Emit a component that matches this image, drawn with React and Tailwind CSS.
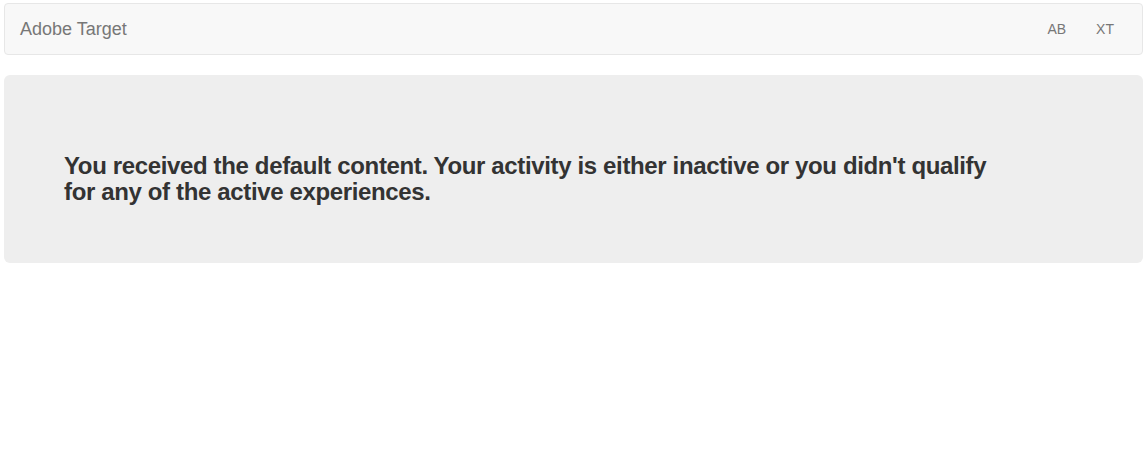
export default function App() {
  return (
    <div
      className="w-full min-h-[473px] bg-white pl-[4px] pr-[2px] pt-[3px]"
      style={{ fontFamily: '"Liberation Sans", Arial, sans-serif' }}
    >
      <nav className="flex h-[52px] items-center justify-between rounded-[4px] border border-[#e7e7e7] bg-[#f8f8f8] pl-[15px] pr-[13px]">
        <span className="text-[18px] leading-[20px] text-[#777]">Adobe Target</span>
        <div className="flex items-center">
          <span className="px-[15px] text-[14px] leading-[20px] text-[#777]">AB</span>
          <span className="px-[15px] text-[14px] leading-[20px] text-[#777]">XT</span>
        </div>
      </nav>
      <div className="mt-[20px] h-[188px] rounded-[6px] bg-[#eee] pl-[60px] pt-[78px]">
        <h3 className="text-[24px] font-bold leading-[26.4px] tracking-[-0.36px] text-[#333]">
          You received the default content. Your activity is either inactive or you didn't qualify
          <br />
          for any of the active experiences.
        </h3>
      </div>
    </div>
  );
}
